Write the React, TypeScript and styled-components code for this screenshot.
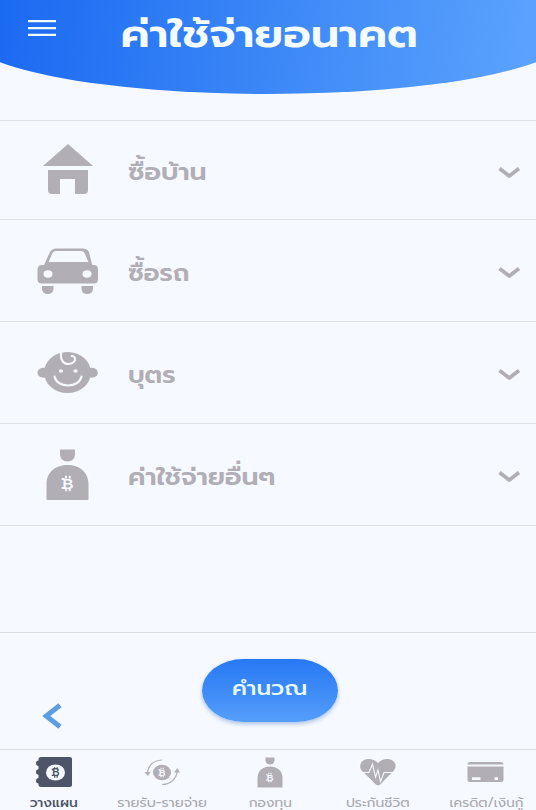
import React from "react";
import styled, { createGlobalStyle } from "styled-components";

const GREY = "#b1aeb6";
const PAPER = "#f6f9ff";

const GlobalStyle = createGlobalStyle`
  * { box-sizing: border-box; }
  body { margin: 0; background: ${PAPER}; overflow: hidden; }
`;

const Screen = styled.div`
  width: 536px;
  height: 810px;
  overflow: hidden;
  display: flex;
  flex-direction: column;
  background: ${PAPER};
  font-family: Prompt, "Noto Sans Thai", "Noto Sans", "Liberation Sans", sans-serif;
`;

const Header = styled.header`
  flex: none;
  height: 94px;
  margin: 0 -34px;
  padding: 0 62px;
  display: grid;
  grid-template-columns: 28px 1fr 28px;
  background: linear-gradient(97deg, #1b6af2 6%, #3b87f7 50%, #5aa2fd 92%);
  border-radius: 0 0 50% 50% / 0 0 59px 59px;
`;

const MenuButton = styled.button`
  height: 17px;
  margin-top: 19px;
  padding: 0;
  border: 0;
  background: none;
`;

const Title = styled.h1`
  margin: 0;
  height: 66px;
  padding-left: 3px;
  line-height: 69px;
  font-size: 38.5px;
  font-weight: 600;
  color: #f4fcff;
  text-align: center;
  white-space: nowrap;
`;

const Stretch = styled.span<{ $x?: number; $origin?: string }>`
  display: inline-block;
  transform: scaleX(${(p) => p.$x ?? 1});
  transform-origin: ${(p) => p.$origin ?? "center"};
`;

const List = styled.main`
  flex: none;
  margin-top: 26px;
  border-top: 1px solid #dce0ea;
`;

const Row = styled.div<{ $h: number }>`
  height: ${(p) => p.$h}px;
  padding: 0 15px 0 36px;
  display: flex;
  align-items: center;
  border-bottom: 1px solid #dce0e8;
`;

const RowLabel = styled.span`
  flex: 1;
  margin-left: 28px;
  padding-top: 4px;
  font-size: 24px;
  font-weight: 600;
  line-height: 40px;
  color: ${GREY};
  white-space: nowrap;
`;

const Actions = styled.section`
  flex: none;
  height: 117px;
  margin-top: 106px;
  border-top: 1px solid #d9dde5;
  display: grid;
  grid-template-columns: 202px 136px 1fr;
  align-items: start;
`;

const BackButton = styled.button`
  margin: 70px 0 0 42px;
  padding: 0;
  width: 20px;
  height: 26px;
  border: 0;
  background: none;
`;

const Calculate = styled.button`
  height: 63px;
  margin-top: 26px;
  padding: 0 0 3px;
  border: 0;
  border-radius: 42px / 32px;
  background: linear-gradient(#2778f4, #559efb);
  box-shadow: 0 2px 4px rgba(60, 110, 190, 0.4);
  font: 500 20.5px/30px Prompt, "Noto Sans Thai", "Noto Sans", "Liberation Sans", sans-serif;
  color: #e8fbff;
  white-space: nowrap;
`;

const Nav = styled.nav`
  flex: none;
  height: 61px;
  border-top: 1px solid #d8dce5;
  display: grid;
  grid-template-columns: repeat(5, 108px);
`;

const Tab = styled.a<{ $active?: boolean }>`
  display: flex;
  flex-direction: column;
  align-items: center;
  padding-top: 6px;
  color: ${(p) => (p.$active ? "#4e5568" : "#a9a7af")};
  font-weight: ${(p) => (p.$active ? 500 : 400)};
`;

const TabLabel = styled.span`
  margin-top: 5px;
  font-size: 13px;
  line-height: 15px;
  white-space: nowrap;
`;

const Svg = styled.svg`
  display: block;
  flex: none;
`;

const RowChevron = styled(Svg)`
  margin-top: 5px;
`;

const Coin = ({ x, y, s, fill }: { x: number; y: number; s: number; fill: string }) => (
  <g transform={`translate(${x} ${y}) scale(${s})`} fill={fill}>
    <text y="5.4" textAnchor="middle" fontFamily="Liberation Sans" fontWeight="700" fontSize="15.500">B</text>
    <path d="M-6.500 -5.600h3v2h-3zM-6.500 3.500h3v2h-3zM-3 -8h2v3h-2zM.8 -8h2v3h-2zM-3 5h2v3h-2zM.8 5h2v3h-2z" />
  </g>
);

const House = () => (
  <Svg width="64" height="60" fill={GREY}>
    <path d="M32 4 57 26H7zM12 30H52V50a4 4 0 0 1-4 4H39V39H24V54H16a4 4 0 0 1-4-4z" />
  </Svg>
);

const Car = () => (
  <Svg width="64" height="61" fill={GREY}>
    <path fillRule="evenodd" d="M7.500 26 14 12Q16 8.500 20 8.500H47Q51 8.500 53 12L56.500 26zM12.500 22H52.500L48.500 13Q47.800 11 45.500 11H20Q17.500 11 16.500 13z" />
    <path fillRule="evenodd" d="M6 25H58Q62 25 62 30V39Q62 43.500 58 43.500H6Q1.500 43.500 1.500 39V30Q1.500 25 6 25zM7.500 34a4.500 3.700 0 1 0 9 0a4.500 3.700 0 1 0-9 0zM46.500 34a4.500 3.700 0 1 0 9 0a4.500 3.700 0 1 0-9 0z" />
    <path d="M6 46H17.500V49Q17 54 11.700 54T6 49zM45.500 46H57V49Q56.500 54 51.200 54T45.500 49z" />
  </Svg>
);

const Baby = () => (
  <Svg width="64" height="61" fill={GREY}>
    <ellipse cx="31.500" cy="30.500" rx="23.500" ry="20.500" />
    <ellipse cx="7.500" cy="30.700" rx="6" ry="5" />
    <ellipse cx="55.800" cy="30.700" rx="6" ry="5" />
    <g fill={PAPER}>
      <ellipse cx="25" cy="29" rx="2.200" ry="1.800" />
      <ellipse cx="39.500" cy="29" rx="2.200" ry="1.800" />
    </g>
    <g fill="none" stroke={PAPER} strokeWidth="2.100" strokeLinecap="round">
      <path d="M18.500 34.500C21 46.500 43 46.500 45.500 34.500" />
      <path d="M25.300 10C23.800 17 27 22 32.500 22C37.500 22 40 18.500 38.800 15.800C38.200 14.300 37 13.800 35.800 14" />
    </g>
  </Svg>
);

const Bag = () => (
  <Svg width="64" height="61" fill={GREY}>
    <path d="M24 5.500H39V11Q38 17.500 31.500 17.500T24 11zM10.500 40C10.500 28 20 21 31.500 21S52.500 28 52.500 40V55Q52.500 56 51.500 56H11.500Q10.500 56 10.500 55z" />
    <Coin x={32} y={39.5} s={0.98} fill={PAPER} />
  </Svg>
);

const Chevron = () => (
  <RowChevron width="23" height="14" fill="none" stroke={GREY} strokeWidth="3.800" strokeLinejoin="round">
    <path d="M1.500 2.600 11.300 10.100 21 2.600" />
  </RowChevron>
);

const Ledger = () => (
  <Svg width="42" height="34" fill="#4e5568">
    <path d="M8 1H37Q39 1 39 3V29Q39 31 37 31H8Q5.500 31 5.500 28.500V3.500Q5.500 1 8 1z" />
    <rect x="3" y="4.500" width="8" height="5.500" rx="2.700" />
    <rect x="3" y="13.200" width="8" height="5.500" rx="2.700" />
    <rect x="3" y="22" width="8" height="5.500" rx="2.700" />
    <ellipse cx="22.500" cy="16.500" rx="9.500" ry="8" fill={PAPER} />
    <Coin x={23} y={16.500} s={0.65} fill="#4e5568" />
  </Svg>
);

const Exchange = () => (
  <Svg width="42" height="34" fill={GREY}>
    <ellipse cx="21" cy="16.500" rx="9" ry="7.800" />
    <Coin x={21.200} y={16.500} s={0.58} fill={PAPER} />
    <path d="M21 4C12 4.500 7 10 6.500 16.500M21 28.500C30 28.500 35.500 22 36 16" fill="none" stroke={GREY} strokeWidth="1.200" />
    <path d="M3.500 16H9.500L7 20zM33 16.500 36.500 12 39 16.500z" />
  </Svg>
);

const Fund = () => (
  <Svg width="42" height="34" fill={GREY}>
    <path d="M16.500 1.500H25.500V4.500Q25 8.500 21 8.500T16.500 4.500zM8.500 22C8.500 14.500 14 10.500 21 10.500S33.500 14.500 33.500 22V31.500H8.500z" />
    <Coin x={21} y={21.500} s={0.6} fill={PAPER} />
  </Svg>
);

const Heart = () => (
  <Svg width="42" height="34" fill={GREY}>
    <path d="M21 29.500Q18.500 29 15 24.500L5 15C1 10 4 3 11.500 3Q17 3 21 7Q25 3 30 3C38 3 41 10 36.500 15L27 24.500Q23.500 29 21 29.500z" />
    <path d="M5 16.500H12L15.500 8 18.500 21 21 14 23.500 25.500 27 16.500H36" fill="none" stroke={PAPER} strokeWidth="1.100" />
  </Svg>
);

const Card = () => (
  <Svg width="42" height="34" fill={GREY}>
    <path fillRule="evenodd" d="M5 6H36Q38.500 6 38.500 8.500H2.500Q2.500 6 5 6zM2.500 10.500H38.500V23.500Q38.500 26 36 26H5Q2.500 26 2.500 23.500zM7 21.200V24H15.500V21.200zM29.500 21.200V24H33V21.200z" />
  </Svg>
);

const rows = [
  { label: "ซื้อบ้าน", icon: <House />, h: 99, x: 1.11 },
  { label: "ซื้อรถ", icon: <Car />, h: 102, x: 1.06 },
  { label: "บุตร", icon: <Baby />, h: 102, x: 1.06 },
  { label: "ค่าใช้จ่ายอื่นๆ", icon: <Bag />, h: 102, x: 1.11 },
];

const tabs = [
  { label: "วางแผน", icon: <Ledger />, x: 1.06, active: true },
  { label: "รายรับ-รายจ่าย", icon: <Exchange />, x: 1.09 },
  { label: "กองทุน", icon: <Fund />, x: 1.06 },
  { label: "ประกันชีวิต", icon: <Heart />, x: 1.07 },
  { label: "เครดิต/เงินกู้", icon: <Card />, x: 1.04 },
];

export default function App() {
  return (
    <Screen>
      <GlobalStyle />
      <Header>
        <MenuButton aria-label="เมนู">
          <Svg width="28" height="17" fill="#f1faff">
            <path d="M0 .9h28v2.300H0zM0 8h28v2.300H0zM0 14.700h28v2.300H0z" />
          </Svg>
        </MenuButton>
        <Title>
          <Stretch $x={1.16}>ค่าใช้จ่ายอนาคต</Stretch>
        </Title>
      </Header>
      <List>
        {rows.map((r) => (
          <Row key={r.label} $h={r.h}>
            {r.icon}
            <RowLabel>
              <Stretch $x={r.x} $origin="left">{r.label}</Stretch>
            </RowLabel>
            <Chevron />
          </Row>
        ))}
      </List>
      <Actions>
        <BackButton aria-label="ย้อนกลับ">
          <Svg width="20" height="26" fill="none" stroke="#5b9ee6" strokeWidth="5">
            <path d="M18 2.300 4.300 13 18 23.700" />
          </Svg>
        </BackButton>
        <Calculate>
          <Stretch $x={1.12}>คำนวณ</Stretch>
        </Calculate>
      </Actions>
      <Nav>
        {tabs.map((t) => (
          <Tab key={t.label} $active={t.active}>
            {t.icon}
            <TabLabel>
              <Stretch $x={t.x}>{t.label}</Stretch>
            </TabLabel>
          </Tab>
        ))}
      </Nav>
    </Screen>
  );
}
